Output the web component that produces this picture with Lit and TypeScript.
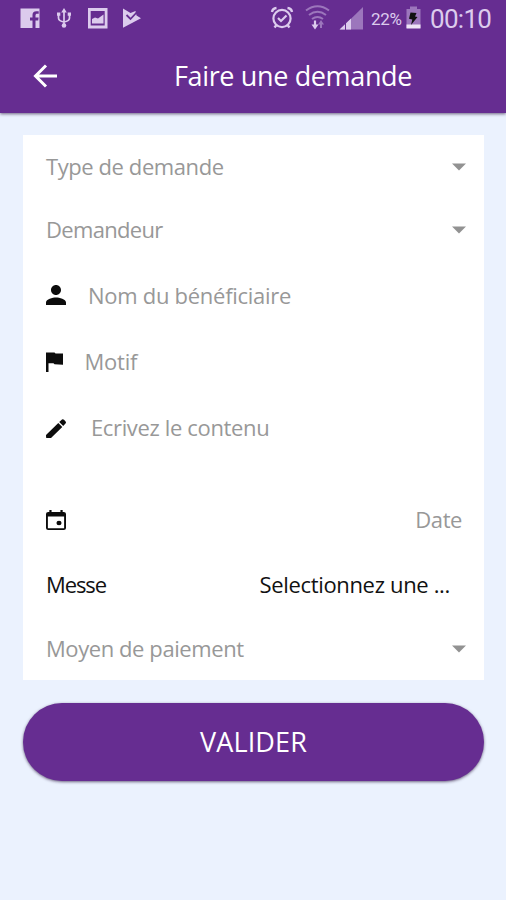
import { LitElement, html, css, svg } from "lit";
import { customElement } from "lit/decorators.js";

const icons = {
  person: svg`<path d="M12 12c2.200 0 4-1.800 4-4s-1.800-4-4-4-4 1.800-4 4 1.800 4 4 4zm0 2c-2.700 0-8 1.300-8 4v2h16v-2c0-2.700-5.300-4-8-4z"/>`,
  flag: svg`<path d="M0 .5h8.500l1 1H17V12.800l-8.500-.6-1-1H2.500V20H0z"/>`,
  pen: svg`<path d="M0 16L12.300 3.900 16.300 7.900 4.500 19.500Q2.500 20.500.5 20 0 18.500 0 16zM13.200 3L16 .6Q17 0 18 .8L19.600 2.600Q20.400 3.600 19.500 4.600L17.200 7z"/>`,
  event: svg`<path d="M16 1v2H8V1H6v2H5a2 2 0 0 0-2 2v14a2 2 0 0 0 2 2h14a2 2 0 0 0 2-2V5a2 2 0 0 0-2-2h-1V1h-2zm3.300 18.300h-14.600V7.500h14.600v11.800z"/><circle cx="14.700" cy="14" r="2.300"/>`,
};

@customElement("app-root")
export class AppRoot extends LitElement {
  static styles = css`
    :host {
      display: block;
      height: 900px;
      background: #ebf2fe;
      font-family: "Open Sans", "Noto Sans", sans-serif;
      overflow: hidden;
    }
    svg { display: block; flex: none; }
    .top {
      background: #662d91;
      height: 113px;
      box-shadow: 0 1px 3px rgba(40, 20, 60, 0.65);
      color: #fff;
    }
    .status {
      height: 38px;
      display: flex;
      justify-content: space-between;
      padding: 0 15px 0 20px;
      color: #dccbed;
      font-family: Roboto, sans-serif;
    }
    .group { display: flex; align-items: center; }
    .pct { font-size: 17px; letter-spacing: -0.3px; margin-left: 7px; width: 35px; white-space: nowrap; }
    .clock { font-size: 26px; line-height: 38px; margin-left: 9px; width: 61px; white-space: nowrap; letter-spacing: -0.7px; }
    .bar { display: flex; align-items: center; height: 75px; padding-left: 33px; }
    .title {
      margin-left: 117px;
      font-size: 27px;
      line-height: 36px;
      letter-spacing: -0.36px;
      white-space: nowrap;
    }
    .card { margin: 22px 22px 0 23px; background: #fff; height: 545px; }
    .row {
      height: 66px;
      display: flex;
      align-items: center;
      padding: 0 18px 0 23px;
      font-size: 22px;
      line-height: 30px;
      letter-spacing: -0.42px;
      color: #989898;
      white-space: nowrap;
    }
    .row span { padding-bottom: 2px; }
    .short { height: 63px; }
    .tall { height: 68px; letter-spacing: -0.28px; }
    .row .name { padding-bottom: 0; }
    .date { height: 65px; margin-top: 26px; padding-right: 22px; }
    .messe { height: 65px; color: #111; padding-right: 34px; letter-spacing: -0.34px; }
    .requester { letter-spacing: -0.68px; }
    .label { letter-spacing: -1.1px; }
    .motif { letter-spacing: -0.2px; }
    .end { margin-left: auto; }
    .icon { color: #0c0c0c; margin-left: -0.5px; }
    .name { margin-left: 22.5px; }
    .motif { margin-left: 22px; }
    .content { margin-left: 25.5px; letter-spacing: -0.36px; }
    .submit {
      display: flex;
      align-items: center;
      justify-content: center;
      width: 461px;
      height: 78px;
      margin: 23px 0 0 23px;
      padding: 0 0 1px;
      border: 0;
      border-radius: 39px;
      background: #662d91;
      color: #fff;
      font: 27px "Open Sans", sans-serif;
      letter-spacing: 0.15px;
      box-shadow: 0 1px 3px rgba(40, 20, 60, 0.65);
    }
  `;

  private icon(shape: unknown, width: number, viewBox: string) {
    return html`<svg class="icon" width=${width} height="20" viewBox=${viewBox} preserveAspectRatio="none" fill="currentColor">${shape}</svg>`;
  }

  private caret() {
    return html`<svg class="end" width="14" height="8" viewBox="0 0 14 8"><path d="M0 0.500h14L7 7.500z" fill="#929292"/></svg>`;
  }

  render() {
    return html`
      <header class="top">
        <div class="status">
          <div class="group">
            <svg width="122" height="38" viewBox="20 0 122 38" fill="currentColor">
              <path d="M20.500 8.500h19v19.500h-4v-7.500h2.700l.4-3h-3.100v-2c0-1.200.6-1.700 1.700-1.700h1.500v-2.600h-2.400c-2.600 0-3.800 1.500-3.800 3.800v2.500H30v3h2.500V28h-12z"/>
              <path d="M64 11v15M58.500 14.500v3.500q0 3 5.500 4 5.500-1 5.500-4v-3.500" fill="none" stroke="currentColor" stroke-width="1.700"/>
              <path d="M64 8l-2.800 4.500h5.600zM57 12.500h3.300v3.300H57zM67.700 12.500H71v3.300h-3.300z"/><circle cx="64" cy="25.500" r="2.300"/>
              <path fill-rule="evenodd" d="M88 8h19.500v20.500H88zM90.700 11v14.500h14V11z"/>
              <path d="M92 23.500V19l3-1.500 3 1 5.500-4v9z"/>
              <path d="M123 8.500l7.500 4.500 5-2 1 4.500 4.500 2.700-18 9.500z"/>
              <path d="M126.500 15l4 4L138 11" fill="none" stroke="#662d91" stroke-width="1.800"/>
            </svg>
          </div>
          <div class="group">
            <svg width="94" height="38" viewBox="270 0 94 38" fill="none" stroke="currentColor">
              <circle cx="282" cy="18.500" r="8.600" stroke-width="2.200"/>
              <path d="M278 18l3 3 5.500-5.500" stroke-width="2.200"/>
              <path d="M272 12q.5-3.500 4.500-4M292 12q-.5-3.500-4.500-4M276.500 25l-2 2.500M287.500 25l2 2.500" stroke-width="2.400"/>
              <g stroke="#9c76bc" stroke-width="2"><path d="M306 10.500q11.500-8.500 23 0M309 15q8.500-6.500 17 0M312 19q5.500-4 11 0"/></g>
              <path d="M315 20.500v5" stroke-width="2.200"/><path d="M311.500 24.500h7l-3.500 5z" fill="currentColor" stroke="none"/>
              <path d="M321 28v-5" stroke="#9c76bc" stroke-width="2"/><path d="M318 24.500l3-4.500 3 4.500z" fill="#9c76bc" stroke="none"/>
              <path d="M363 7v22.500h-23z" fill="#9c76bc" stroke="none"/>
              <path d="M351 18.500v11h-11.500z" fill="currentColor" stroke="none"/>
              <path d="M345.500 22v8" stroke="#662d91" stroke-width="1"/>
            </svg>
            <span class="pct">22%</span>
            <svg width="15" height="38" viewBox="406 0 15 38">
              <path d="M410 6.500h7V9h3.500v19H406.500V9h3.500z" fill="#9c76bc"/>
              <path d="M406.500 24.500h14v4h-14z" fill="#eee4f6"/>
              <path d="M410.500 12.500l6 .5-1.500 3.500 2.500.5-6.500 8 1.300-5.500-3.300-.8z" fill="#111"/>
            </svg>
            <span class="clock">00:10</span>
          </div>
        </div>
        <div class="bar">
          <svg width="24" height="24" viewBox="0 0 24 24" fill="none" stroke="#fff" stroke-width="3"><path d="M24 12H3M13 1.500L2.500 12 13 22.500"/></svg>
          <span class="title">Faire une demande</span>
        </div>
      </header>
      <main>
        <section class="card">
          <div class="row short"><span>Type de demande</span>${this.caret()}</div>
          <div class="row short requester"><span>Demandeur</span>${this.caret()}</div>
          <div class="row tall">${this.icon(icons.person, 20, "4 4 16 16")}<span class="name">Nom du bénéficiaire</span></div>
          <div class="row">${this.icon(icons.flag, 17, "0 0 17 20")}<span class="motif">Motif</span></div>
          <div class="row">${this.icon(icons.pen, 20, "0 -1 20 20")}<span class="content">Ecrivez le contenu</span></div>
          <div class="row date">${this.icon(icons.event, 20, "3 1 18 20")}<span class="end">Date</span></div>
          <div class="row messe"><span class="label">Messe</span><span class="end">Selectionnez une ...</span></div>
          <div class="row short"><span>Moyen de paiement</span>${this.caret()}</div>
        </section>
        <button class="submit">VALIDER</button>
      </main>
    `;
  }
}
